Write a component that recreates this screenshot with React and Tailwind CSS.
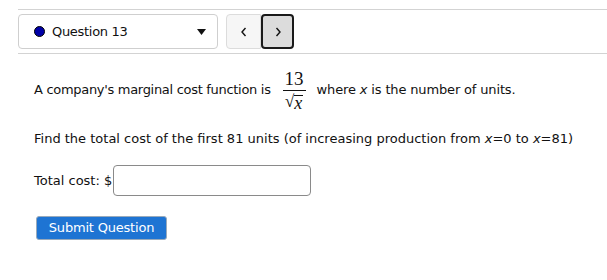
export default function App() {
  const font = { fontFamily: '"DejaVu Sans", Verdana, sans-serif' };
  return (
    <div className="w-[607px] h-[280px] bg-white text-[#111] overflow-hidden" style={{ fontFamily: 'Tahoma, "DejaVu Sans", sans-serif' }}>
      <div className="ml-[18px] mt-[9px] border-y border-[#d3d3d3] h-[45px] flex items-center gap-[8px]">
        <div className="w-[200px] h-[35px] border border-[#cfcfcf] rounded-[4px] flex items-center pl-[15px] pr-[10px]">
          <span className="w-[11px] h-[11px] rounded-full bg-[#0000a8] border border-[#000]"></span>
          <span className="ml-[7px] text-[13px] tracking-[-0.3px] leading-none flex-1 text-[#111]">Question 13</span>
          <svg width="9" height="6" viewBox="0 0 9 6" className="mr-[1px]"><path d="M0 0 H9 L4.5 6 Z" fill="#111" /></svg>
        </div>
        <div className="flex h-[35px]">
          <div className="w-[35px] h-full bg-[#f6f6f6] border border-[#dcdcdc] rounded-l-[4px] flex items-center justify-center">
            <svg width="8" height="10" viewBox="0 0 8 10"><path d="M5.5 1 L2 5 L5.5 9" stroke="#111" strokeWidth="1.4" fill="none" /></svg>
          </div>
          <div className="w-[33px] h-full bg-[#dcdcdc] border-2 border-[#1a1a1a] rounded-[4px] flex items-center justify-center">
            <svg width="8" height="10" viewBox="0 0 8 10"><path d="M2.5 1 L6 5 L2.5 9" stroke="#111" strokeWidth="1.4" fill="none" /></svg>
          </div>
        </div>
      </div>
      <div className="pl-[34px] text-[13px]" style={font}>
        <div className="mt-[14px] flex items-center h-[44px]">
          <span className="tracking-[-0.3px]">A company's marginal cost function is</span>
          <span className="inline-flex flex-col items-center ml-[12px] mr-[11px]" style={{ fontFamily: '"Liberation Serif", "DejaVu Serif", serif' }}>
            <span className="text-[19px] leading-[18px]">13</span>
            <span className="w-[23px] h-[1px] bg-[#111] mt-[2px]"></span>
            <span className="flex items-end mt-[2px]">
              <span className="text-[17px] leading-[17px]">√</span>
              <span className="border-t border-[#111] text-[18px] leading-[14px] italic pr-[1px]" style={{ fontFamily: '"Liberation Serif", serif' }}>x</span>
            </span>
          </span>
          <span className="tracking-[-0.15px]">where <i>x</i> is the number of units.</span>
        </div>
        <div className="mt-[19px] leading-[16px]">Find the total cost of the first 81 units (of increasing production from <i>x</i>=0 to <i>x</i>=81)</div>
        <div className="mt-[18px] flex items-center">
          <span>Total cost: $</span>
          <div className="ml-[1px] w-[198px] h-[31px] border border-[#8a8a8a] rounded-[4px]"></div>
        </div>
        <div className="mt-[20px] ml-[2px] w-[131px] h-[24px] bg-[#1e74d3] border border-[#9ab] rounded-[3px] text-white text-[13px] flex items-center justify-center tracking-[-0.2px]">Submit Question</div>
      </div>
    </div>
  );
}
